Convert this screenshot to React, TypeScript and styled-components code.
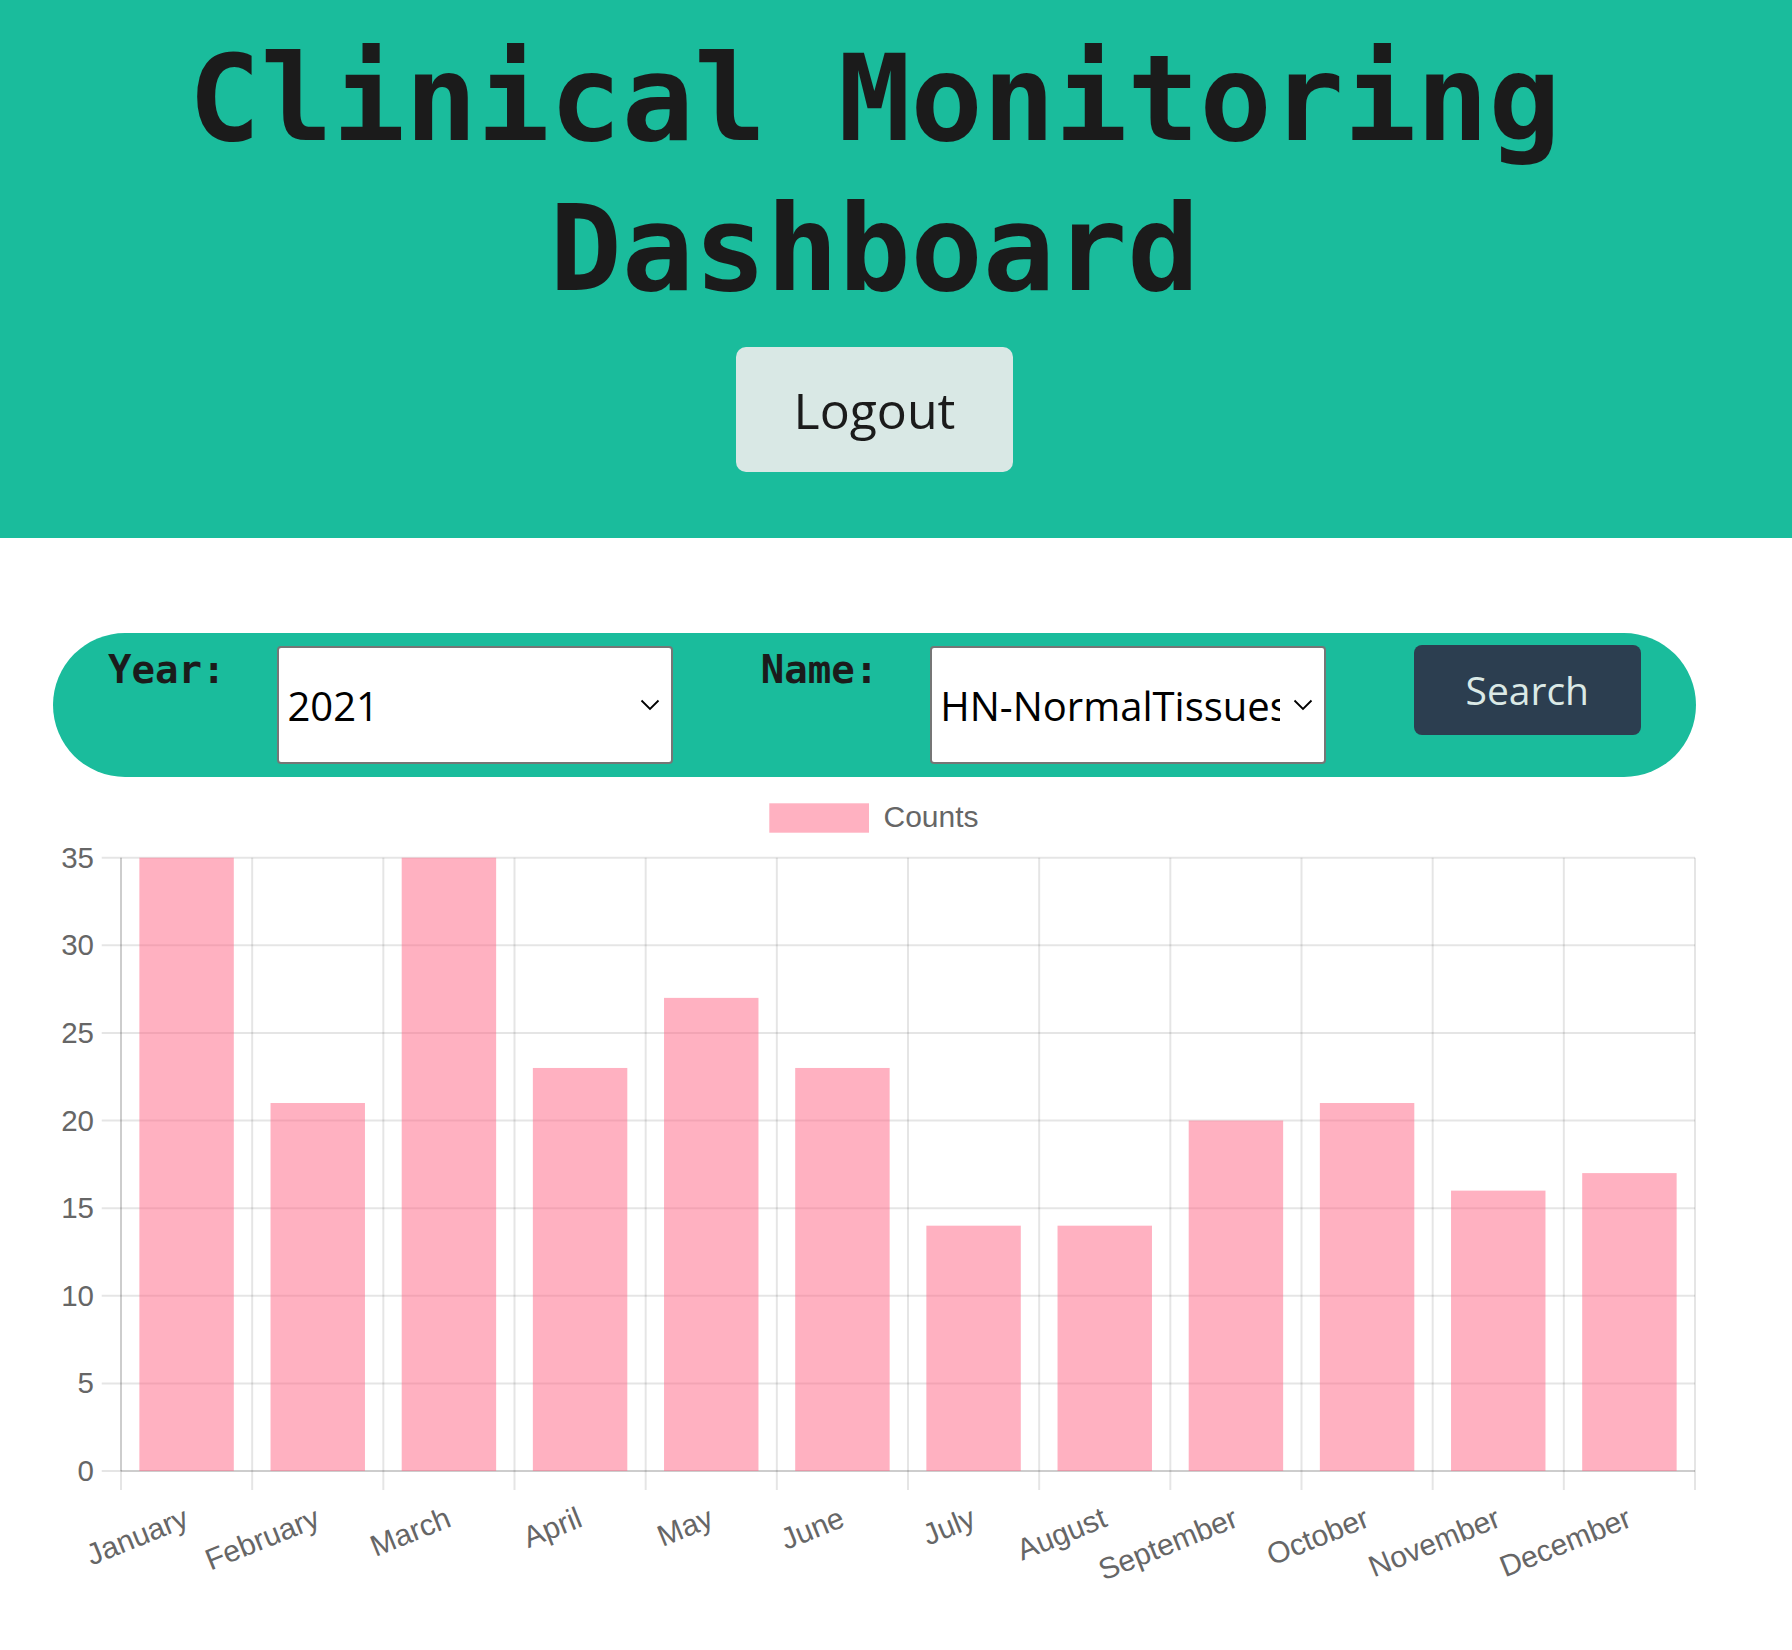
import React from "react";
import styled, { createGlobalStyle } from "styled-components";

const GlobalStyle = createGlobalStyle`
  html, body {
    margin: 0;
    padding: 0;
    background: #ffffff;
  }
  body {
    font-family: "Open Sans", "Liberation Sans", sans-serif;
  }
`;

const TEAL = "#1abc9c";
const INK = "#1b1b1b";

const Header = styled.header`
  background: ${TEAL};
  padding: 24px 43px 65.5px 0;
  display: flex;
  flex-direction: column;
  align-items: center;
`;

const Title = styled.h1`
  margin: 0;
  font-family: "DejaVu Sans Mono", "Liberation Mono", monospace;
  font-weight: 700;
  font-size: 120px;
  line-height: 150px;
  color: ${INK};
  text-align: center;
`;

const LogoutButton = styled.button`
  margin-top: 23px;
  padding: 28.5px 58px;
  border: none;
  border-radius: 10px;
  background: #d9e8e5;
  color: ${INK};
  font-family: "Open Sans", sans-serif;
  font-size: 50px;
  line-height: 68px;
  cursor: pointer;
`;

const Main = styled.main`
  width: 1749px;
  box-sizing: border-box;
  padding: 95.5px 53px 0;
`;

const FilterBar = styled.form`
  height: 144px;
  box-sizing: border-box;
  padding: 12px 55px;
  display: flex;
  justify-content: space-between;
  align-items: flex-start;
  background: ${TEAL};
  border-radius: 72px;
`;

const Field = styled.div`
  display: flex;
  align-items: flex-start;
  gap: 52px;
`;

const Label = styled.label`
  margin-top: 2px;
  font-family: "DejaVu Sans Mono", "Liberation Mono", monospace;
  font-weight: 700;
  font-size: 39px;
  color: ${INK};
`;

const SelectWrap = styled.div`
  position: relative;
  width: 396px;
  height: 118px;
  margin-top: 1px;
`;

const Select = styled.select`
  appearance: none;
  -webkit-appearance: none;
  width: 100%;
  height: 100%;
  box-sizing: border-box;
  border: 2px solid #767676;
  border-radius: 4px;
  background: #ffffff;
  color: #000000;
  font-family: "Open Sans", sans-serif;
  font-size: 40px;
  padding: 0 44px 0 8px;
  outline: none;
`;

const Chevron = styled.svg`
  position: absolute;
  right: 13px;
  top: 50%;
  transform: translateY(-50%);
  pointer-events: none;
`;

const SearchButton = styled.button`
  padding: 18px 52px;
  border: none;
  border-radius: 8px;
  background: #2c3e50;
  color: #dbe9e6;
  font-family: "Open Sans", sans-serif;
  font-size: 39px;
  line-height: 54px;
  cursor: pointer;
`;

const ChartSvg = styled.svg`
  display: block;
  font-family: "Liberation Sans", Arial, sans-serif;
`;

const months = [
  "January",
  "February",
  "March",
  "April",
  "May",
  "June",
  "July",
  "August",
  "September",
  "October",
  "November",
  "December",
];
const counts = [35, 21, 35, 23, 27, 23, 14, 14, 20, 21, 16, 17];

const SelectField: React.FC<{ label: string; options: string[]; value: string }> = ({
  label,
  options,
  value,
}) => (
  <Field>
    <Label>{label}</Label>
    <SelectWrap>
      <Select defaultValue={value}>
        {options.map((o) => (
          <option key={o} value={o}>
            {o}
          </option>
        ))}
      </Select>
      <Chevron width="20" height="12" viewBox="0 0 20 12">
        <polyline points="1.5,1.5 10,10 18.5,1.5" fill="none" stroke="#000" strokeWidth="1.8" />
      </Chevron>
    </SelectWrap>
  </Field>
);

const BarChart: React.FC = () => {
  const W = 1643;
  const H = 860;
  const plotL = 68;
  const plotR = 1642;
  const plotT = 80.7;
  const plotB = 694;
  const maxV = 35;
  const catW = (plotR - plotL) / 12;
  const barW = catW * 0.72;
  const yOf = (v: number) => plotB - ((plotB - plotT) * v) / maxV;
  const grid = "rgba(0,0,0,0.1)";
  const ticks = [0, 5, 10, 15, 20, 25, 30, 35];

  return (
    <ChartSvg width={W} height={H} viewBox={`0 0 ${W} ${H}`}>
      {/* legend */}
      <rect x={716.3} y={26.3} width={99.7} height={29.4} fill="rgba(255,99,132,0.5)" />
      <text x={830.5} y={49.5} fontSize={30} fill="#666">
        Counts
      </text>

      {/* horizontal grid */}
      {ticks.map((v) => (
        <line key={`h${v}`} x1={48.7} x2={plotR} y1={yOf(v)} y2={yOf(v)} stroke={grid} strokeWidth={2} />
      ))}
      {/* vertical grid */}
      {Array.from({ length: 13 }).map((_, i) => (
        <line
          key={`v${i}`}
          x1={plotL + i * catW}
          x2={plotL + i * catW}
          y1={plotT}
          y2={713}
          stroke={grid}
          strokeWidth={2}
        />
      ))}
      {/* axis borders */}
      <line x1={plotL} x2={plotL} y1={plotT} y2={plotB} stroke={grid} strokeWidth={2} />
      <line x1={plotL} x2={plotR} y1={plotB} y2={plotB} stroke={grid} strokeWidth={2} />

      {/* bars */}
      {counts.map((v, i) => {
        const cx = plotL + catW * (i + 0.5);
        return (
          <rect
            key={`b${i}`}
            x={cx - barW / 2}
            y={yOf(v)}
            width={barW}
            height={plotB - yOf(v)}
            fill="rgba(255,99,132,0.5)"
          />
        );
      })}

      {/* y labels */}
      {ticks.map((v) => (
        <text key={`yl${v}`} x={41} y={yOf(v) + 10} fontSize={29.5} fill="#666" textAnchor="end">
          {v}
        </text>
      ))}

      {/* x labels */}
      {months.map((m, i) => {
        const cx = plotL + catW * (i + 0.5);
        return (
          <text
            key={m}
            transform={`translate(${cx}, 739) rotate(-22)`}
            y={10.5}
            fontSize={30}
            fill="#666"
            textAnchor="end"
          >
            {m}
          </text>
        );
      })}
    </ChartSvg>
  );
};

export default function App() {
  return (
    <>
      <GlobalStyle />
      <Header>
        <Title>Clinical Monitoring Dashboard</Title>
        <LogoutButton type="button">Logout</LogoutButton>
      </Header>
      <Main>
        <FilterBar onSubmit={(e) => e.preventDefault()}>
          <SelectField label="Year:" options={["2019", "2020", "2021", "2022"]} value="2021" />
          <SelectField
            label="Name:"
            options={["HN-NormalTissues", "Lung-OAR", "Prostate-OAR"]}
            value="HN-NormalTissues"
          />
          <SearchButton type="submit">Search</SearchButton>
        </FilterBar>
        <BarChart />
      </Main>
    </>
  );
}
